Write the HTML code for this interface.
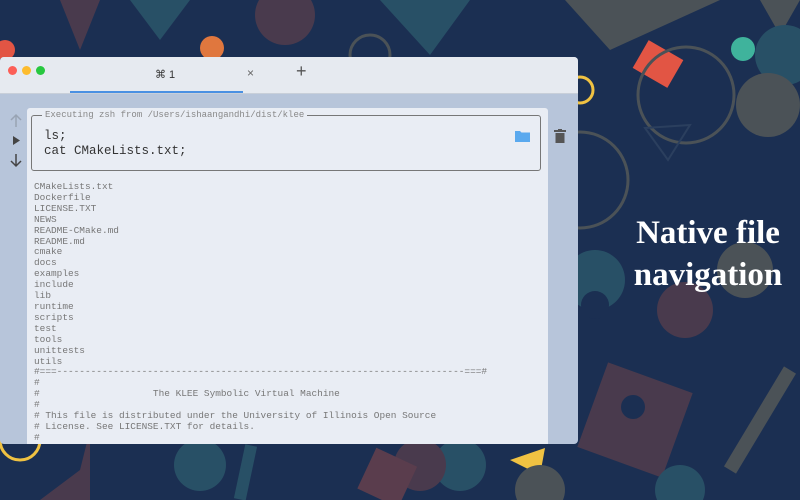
<!DOCTYPE html>
<html><head><style>
body{margin:0;width:800px;height:500px;overflow:hidden;background:#1b2f52;position:relative;font-family:"Liberation Sans",sans-serif}
svg.bg{position:absolute;left:0;top:0}
.win{position:absolute;left:0;top:57px;width:578px;height:387px;background:#b7c5da;border-radius:4px;overflow:hidden}
.title{position:absolute;left:0;top:0;width:578px;height:36px;background:#e6eaf0;border-bottom:1px solid #c8cfd9}
.dot{position:absolute;top:9px;width:9px;height:9px;border-radius:50%}
.tabline{position:absolute;left:70px;top:34px;width:173px;height:2px;background:#4a90e2}
.panel{position:absolute;left:27px;top:51px;width:521px;height:340px;background:#e9edf4;border-radius:3px}
.cmd{position:absolute;left:4px;top:7px;width:508px;height:54px;border:1px solid #777;border-radius:3px}
.cmd .lbl{position:absolute;left:10px;top:-6px;background:#e9edf4;padding:0 3px;font:9px "Liberation Mono",monospace;color:#888}
.cmd pre{position:absolute;left:12px;top:13px;margin:0;font:12.5px/15px "Liberation Mono",monospace;color:#333}
.out{position:absolute;left:7px;top:74px;margin:0;font:9.45px/10.9px "Liberation Mono",monospace;color:#777;white-space:pre}
.txt{position:absolute;left:600px;width:216px;text-align:center;color:#fff;font:bold 33px/42px "Liberation Serif",serif}
</style></head><body>
<svg class="bg" width="800" height="500">
<polygon points="565,0 720,0 610,50" fill="#4b5257"/>
<polygon points="760,0 800,0 780,35" fill="#4b5257"/>
<circle cx="785" cy="55" r="30" fill="#285066"/>
<circle cx="743" cy="49" r="12" fill="#3fb39c"/>
<rect x="638" y="48" width="40" height="32" fill="#e25544" transform="rotate(30 658 64)"/>
<circle cx="686" cy="95" r="48" fill="none" stroke="#4b5257" stroke-width="3"/>
<circle cx="768" cy="105" r="32" fill="#4b5257"/>
<polygon points="645,128 690,125 668,160" fill="none" stroke="#2b3f5e" stroke-width="2"/>
<circle cx="580" cy="90" r="13" fill="none" stroke="#f0c242" stroke-width="3"/>
<circle cx="580" cy="180" r="48" fill="none" stroke="#4b5257" stroke-width="3"/>
<circle cx="595" cy="280" r="30" fill="#285066"/>
<circle cx="595" cy="305" r="14" fill="#1b2f52"/>
<circle cx="745" cy="270" r="28" fill="#4b5257"/>
<circle cx="685" cy="310" r="28" fill="#493a4d"/>
<rect x="590" y="375" width="90" height="90" fill="#493a4d" transform="rotate(20 635 420)"/>
<circle cx="633" cy="407" r="12" fill="#1b2f52"/>
<line x1="790" y1="370" x2="730" y2="470" stroke="#4b5257" stroke-width="14"/>
<circle cx="680" cy="490" r="25" fill="#285066"/>
<circle cx="460" cy="465" r="26" fill="#285066"/>
<circle cx="200" cy="465" r="26" fill="#285066"/>
<rect x="240" y="445" width="12" height="55" fill="#285066" transform="rotate(12 246 470)"/>
<polygon points="80,470 90,430 90,500 40,500" fill="#493a4d"/>
<circle cx="420" cy="465" r="26" fill="#493a4d"/>
<rect x="365" y="455" width="45" height="45" fill="#5a3d4d" transform="rotate(25 387 477)"/>
<polygon points="510,460 545,448 540,475" fill="#f0c242"/>
<circle cx="20" cy="440" r="20" fill="none" stroke="#f0c242" stroke-width="3"/>
<circle cx="540" cy="490" r="25" fill="#4b5257"/>
<circle cx="212" cy="48" r="12" fill="#e0773e"/>
<circle cx="5" cy="50" r="10" fill="#e25544"/>
<polygon points="60,0 100,0 80,50" fill="#493a4d"/>
<polygon points="130,0 190,0 160,40" fill="#285066"/>
<circle cx="285" cy="15" r="30" fill="#493a4d"/>
<polygon points="380,0 470,0 430,55" fill="#285066"/>
<circle cx="370" cy="55" r="20" fill="none" stroke="#4b5257" stroke-width="3"/>
</svg>
<div class="win">
<div class="title">
<div class="dot" style="left:8px;background:#fc5f57"></div>
<div class="dot" style="left:22px;background:#fdbc2e"></div>
<div class="dot" style="left:36px;background:#28c840"></div>
<div style="position:absolute;left:155px;top:11px;font-size:11px;color:#333">⌘ 1</div>
<div style="position:absolute;left:247px;top:9px;font-size:12px;color:#666">×</div>
<div style="position:absolute;left:296px;top:4px;font-size:18px;color:#555">+</div>
<div class="tabline"></div>
</div>
<svg style="position:absolute;left:8px;top:55px" width="16" height="60">
<path d="M8 3V15M3 8L8 3L13 8" stroke="#98a3b3" stroke-width="1.5" fill="none"/>
<path d="M5 24L12 28.5L5 33Z" fill="#444"/>
<path d="M8 42V54M3 49L8 54L13 49" stroke="#444" stroke-width="1.5" fill="none"/>
</svg>
<svg style="position:absolute;left:554px;top:72px" width="12" height="14"><rect x="0" y="1" width="12" height="2" fill="#555"/><rect x="4" y="0" width="4" height="2" fill="#555"/><rect x="1.5" y="4" width="9" height="10" fill="#555"/></svg>
<div class="panel">
<div class="cmd"><div class="lbl">Executing zsh from /Users/ishaangandhi/dist/klee</div>
<pre>ls;
cat CMakeLists.txt;</pre>
<svg style="position:absolute;left:483px;top:14px" width="15" height="12"><path d="M0 1H5L6.5 2.5H15V12H0Z" fill="#5aa9ee"/></svg>
</div>
<pre class="out">CMakeLists.txt
Dockerfile
LICENSE.TXT
NEWS
README-CMake.md
README.md
cmake
docs
examples
include
lib
runtime
scripts
test
tools
unittests
utils
#===------------------------------------------------------------------------===#
#
#                    The KLEE Symbolic Virtual Machine
#
# This file is distributed under the University of Illinois Open Source
# License. See LICENSE.TXT for details.
#
#===------------------------------------------------------------------------===#</pre>
</div>
</div>
<div class="txt" style="top:212px">Native file</div>
<div class="txt" style="top:254px">navigation</div>
</body></html>
